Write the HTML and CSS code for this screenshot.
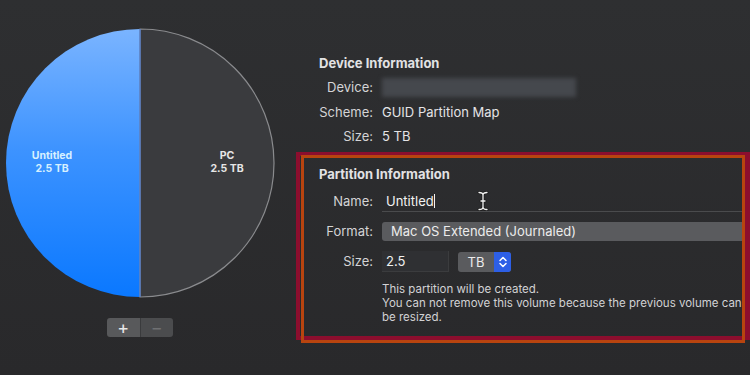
FILE: index.html
```html
<!DOCTYPE html>
<html lang="en">
<head>
    <meta charset="UTF-8">
    <meta name="viewport" content="width=device-width, initial-scale=1.0">
    <title>Partition</title>
    <link rel="stylesheet" href="styles.css">
</head>
<body>
    <div class="janela">
        <div class="lado-pizza">
            <svg class="pizza" width="270" height="270" viewBox="0 0 270 270">
                <defs>
                    <linearGradient id="azul" x1="0" y1="0" x2="0" y2="1">
                        <stop offset="0" stop-color="#7ab4ff"/>
                        <stop offset="0.45" stop-color="#3d93ff"/>
                        <stop offset="1" stop-color="#0a78ff"/>
                    </linearGradient>
                </defs>
                <path d="M134 1 A134 134 0 0 0 134 269 Z" fill="url(#azul)"/>
                <path d="M134 1 A134 134 0 0 1 134 269 Z" fill="#3a3b3e" stroke="#8a8b8e" stroke-width="1.2"/>
                <line x1="134" y1="1" x2="134" y2="269" stroke="#4d7fd8" stroke-width="1.2"/>
                <text x="46" y="131" class="rotulo azul">Untitled</text>
                <text x="46" y="144" class="rotulo azul">2.5 TB</text>
                <text x="221" y="131" class="rotulo">PC</text>
                <text x="221" y="144" class="rotulo">2.5 TB</text>
            </svg>
            <div class="botoes">
                <button class="mais">+</button>
                <button class="menos">&minus;</button>
            </div>
        </div>

        <div class="lado-info">
            <div class="device">
                <div class="titulo">Device Information</div>
                <div class="grade info">
                    <span class="label">Device:</span>
                    <span class="borrado"></span>
                    <span class="label">Scheme:</span>
                    <span class="valor">GUID Partition Map</span>
                    <span class="label">Size:</span>
                    <span class="valor">5 TB</span>
                </div>
            </div>

            <div class="particao">
                <div class="titulo">Partition Information</div>
                <div class="grade form">
                    <span class="label">Name:</span>
                    <div class="campo-nome">Untitled<span class="cursor"></span>
                        <svg class="ibeam" width="12" height="20" viewBox="0 0 12 20">
                            <path d="M2 1.5 Q6 1.5 6 4 Q6 1.5 10 1.5 M6 4 V16 M2 18.5 Q6 18.5 6 16 Q6 18.5 10 18.5 M4 10 H8" fill="none" stroke="#1c1c1c" stroke-width="3" stroke-linecap="round"/>
                            <path d="M2 1.5 Q6 1.5 6 4 Q6 1.5 10 1.5 M6 4 V16 M2 18.5 Q6 18.5 6 16 Q6 18.5 10 18.5 M4 10 H8" fill="none" stroke="#f2f2f2" stroke-width="1.3" stroke-linecap="round"/>
                        </svg>
                    </div>
                    <span class="label">Format:</span>
                    <div class="popup">Mac OS Extended (Journaled)</div>
                    <span class="label">Size:</span>
                    <div class="linha-size">
                        <div class="campo-size">2.5</div>
                        <div class="popup-tb">
                            <span>TB</span>
                            <span class="stepper">
                                <svg width="10" height="14" viewBox="0 0 10 14">
                                    <path d="M2 5.5 L5 2.5 L8 5.5 M2 8.5 L5 11.5 L8 8.5" fill="none" stroke="#fff" stroke-width="1.5" stroke-linecap="round" stroke-linejoin="round"/>
                                </svg>
                            </span>
                        </div>
                    </div>
                    <div class="nota">
                        This partition will be created.<br>
                        You can not remove this volume because the previous volume can not<br>
                        be resized.
                    </div>
                </div>
            </div>
        </div>
    </div>
</body>
</html>
```

FILE: styles.css
```css
body{
    margin: 0;
    background-color: #2b2c2e;
    color: #e4e4e6;
    font-family: Inter, "Open Sans", sans-serif;
    width: 750px;
    height: 375px;
    overflow: hidden;
}
div.janela{
    display: flex;
    height: 375px;
    background: linear-gradient(to bottom, #2e2f31, #29292b);
}
div.lado-pizza{
    width: 296px;
    flex-shrink: 0;
    display: flex;
    flex-direction: column;
    padding-top: 28px;
    box-sizing: border-box;
}
svg.pizza{
    display: block;
    margin-left: 6px;
}
.rotulo{
    font-family: Inter, sans-serif;
    font-size: 10.5px;
    font-weight: 700;
    fill: #e6e6e6;
    text-anchor: middle;
}
.rotulo.azul{
    fill: #d6f0ff;
}
div.botoes{
    display: flex;
    margin-top: 20px;
    margin-left: 107px;
    width: 66px;
    height: 19px;
    border-radius: 3px;
    overflow: hidden;
}
button{
    flex: 1;
    border: none;
    margin: 0;
    padding: 0;
    font-family: Inter, sans-serif;
    font-size: 18px;
    line-height: 19px;
    background-color: #58595b;
    color: #e8e8e8;
}
button.menos{
    background-color: #4b4c4e;
    color: #6f7072;
    border-left: 1px solid #3a3b3d;
}
div.lado-info{
    flex: 1;
    display: flex;
    flex-direction: column;
}
div.device{
    padding: 55px 0 0 23px;
    height: 97px;
}
div.titulo{
    font-size: 13px;
    font-weight: 700;
    line-height: 16px;
    color: #e2e2e4;
}
div.grade{
    display: grid;
    grid-template-columns: 54px 1fr;
    column-gap: 9px;
    font-size: 13px;
    align-items: center;
}
div.info{
    margin-top: 7px;
    row-gap: 5.5px;
}
span.label{
    text-align: right;
    color: #d4d4d6;
    line-height: 19px;
}
span.valor{
    line-height: 19px;
    color: #e4e4e6;
}
span.borrado{
    display: block;
    width: 194px;
    height: 19px;
    background-color: #45484d;
    filter: blur(2px);
}
div.particao{
    position: relative;
    height: 188px;
    border: 4px solid #8c0e2e;
    border-right-width: 5px;
    box-sizing: border-box;
    padding: 10px 3px 0 19px;
    width: 454px;
}
div.particao::after{
    content: "";
    position: absolute;
    top: -1px;
    left: 1px;
    right: 0;
    bottom: -7px;
    border: 3px solid #b8440f;
    pointer-events: none;
}
div.form{
    margin-top: 9px;
    row-gap: 10px;
}
div.campo-nome{
    height: 20px;
    line-height: 20px;
    padding-left: 4px;
    border-bottom: 1px solid #4a4b4d;
    color: #f2f2f2;
    position: relative;
}
span.cursor{
    display: inline-block;
    width: 1px;
    height: 14px;
    background-color: #f2f2f2;
    vertical-align: -2px;
}
svg.ibeam{
    position: absolute;
    left: 95px;
    top: 0;
}
div.popup{
    height: 19px;
    line-height: 19px;
    background-color: #5a5b5e;
    border-radius: 3px 0 0 3px;
    padding-left: 9px;
    color: #ececec;
}
div.linha-size{
    display: flex;
    align-items: center;
    gap: 9px;
}
div.campo-size{
    width: 62px;
    height: 20px;
    line-height: 20px;
    padding-left: 4px;
    background-color: #2f3033;
    border-bottom: 1px solid #3b3c3e;
    border-right: 1px solid #3b3c3e;
    color: #f0f0f0;
}
div.popup-tb{
    display: flex;
    width: 53px;
    height: 20px;
    border-radius: 3px;
    overflow: hidden;
    background-color: #5a5b5e;
    color: #ececec;
}
div.popup-tb span:first-child{
    flex: 1;
    line-height: 20px;
    text-align: center;
}
span.stepper{
    width: 17px;
    background-color: #2d5fe6;
    display: flex;
    align-items: center;
    justify-content: center;
}
div.nota{
    grid-column: 2;
    font-size: 11.5px;
    line-height: 14px;
    color: #d2d2d4;
    white-space: nowrap;
    overflow: hidden;
}
```
